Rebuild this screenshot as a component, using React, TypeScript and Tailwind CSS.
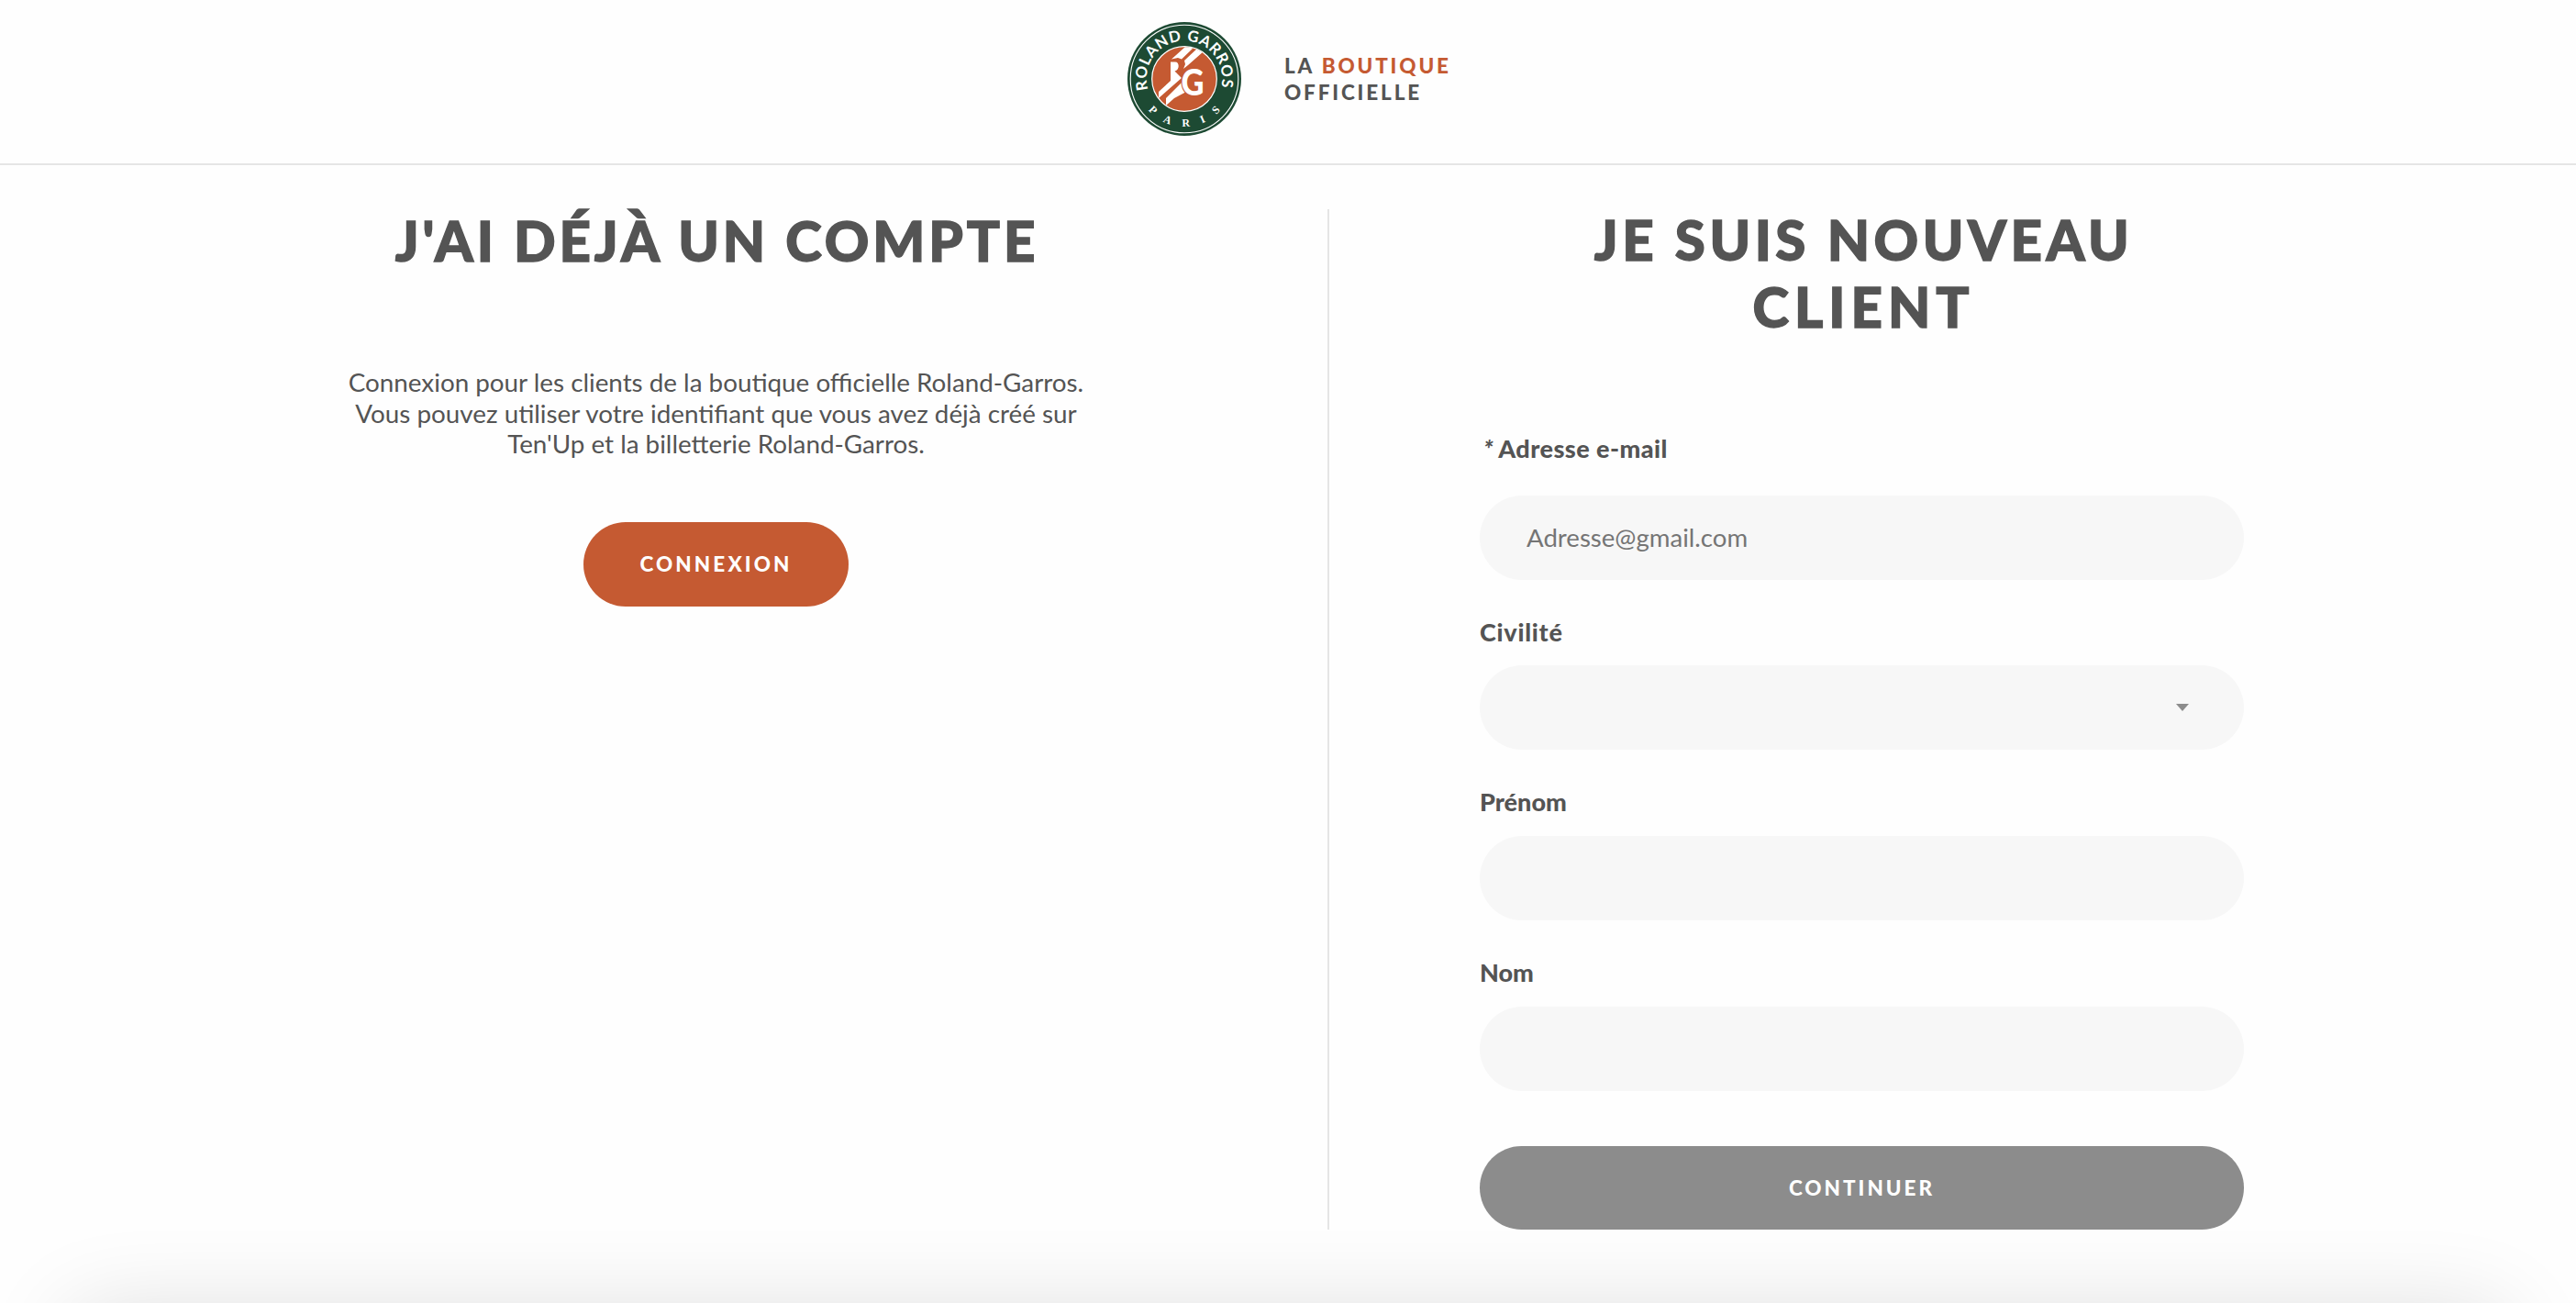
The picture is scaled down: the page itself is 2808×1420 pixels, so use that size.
const inputClass =
  'h-[92px] w-full rounded-full bg-[#f7f7f7] px-[51px] pb-[2px] text-[27.6px] text-[#545454] outline-none placeholder:text-[#757575] placeholder:opacity-100';

function Logo() {
  return (
    <svg width="124" height="124" viewBox="-62 -62 124 124" className="shrink-0">
      <defs>
        <path id="arc-top" d="M-39.5 11.5 A41.2 41.2 0 1 1 39.5 11.5" />
        <path id="arc-bottom" d="M-52 0 A52 52 0 0 0 52 0" />
        <clipPath id="disc">
          <circle r="34.8" />
        </clipPath>
      </defs>
      <circle r="62" fill="#1d4a33" />
      <circle r="58.8" fill="none" stroke="#fff" strokeWidth="1.1" />
      <circle r="35.3" fill="#c55a32" stroke="#fff" strokeWidth="1.2" />
      {/* Court lines, cut by the monogram */}
      <g clipPath="url(#disc)" fill="#fff">
        <path d="M-14 -21.5 L1 -35 H11 L-3 -21.5 L-7 -23 Z" />
        <path d="M0 -20 L16 -35 L21 -30 L4 -15 L-1 -11 L1 -16 Z" />
        <path d="M-15 -18.5 H-10 C-5 -18.5 -5 -9.5 -10.5 -8.5 L-9 -7 L-3 -1 L-28 21 V14 L-15 2 Z" />
        <path d="M-20 21 L-3 4 L4 13 L-11 21 L-20 29 Z" />
      </g>
      <g fill="#fff">
        <text
          x="-3.5"
          y="18"
          fontSize="39"
          fontWeight="900"
          fontFamily="Lato, sans-serif"
          textLength="25"
          lengthAdjust="spacingAndGlyphs"
          stroke="#c55a32"
          strokeWidth="2.4"
          paintOrder="stroke"
        >
          G
        </text>
        <text fontFamily="Lato, sans-serif" fontSize="16.8" fontWeight="700">
          <textPath href="#arc-top" textLength="150" lengthAdjust="spacing">ROLAND GARROS</textPath>
        </text>
        <text fontFamily="Liberation Serif, serif" fontSize="12" fontWeight="700">
          <textPath href="#arc-bottom" startOffset="37" textLength="89" lengthAdjust="spacing">PARIS</textPath>
        </text>
      </g>
    </svg>
  );
}

export default function App() {
  return (
    <div className="flex h-[1420px] w-[2808px] flex-col overflow-hidden bg-[#fefefe] font-['Lato',sans-serif] text-[#545454]">
      <header className="flex h-[180px] shrink-0 justify-center border-b-2 border-[#e5e5e5] pt-6">
        <div className="flex h-[124px] gap-[47px]">
          <Logo />
          <div className="mt-[33px] w-[179px] text-[22.5px] leading-[29px] font-black whitespace-nowrap">
            <p className="tracking-[2.85px]">
              LA <span className="text-[#c55a32]">BOUTIQUE</span>
            </p>
            <p className="tracking-[2.85px]">OFFICIELLE</p>
          </div>
        </div>
      </header>

      <main className="mt-12 flex h-[1112px] shrink-0">
        <section className="flex w-[1447px] shrink-0 flex-col items-center pl-[114px]">
          <h1 className="-mt-[2px] pl-[2px] text-[60px] leading-[72px] font-black tracking-[3.9px] whitespace-nowrap [-webkit-text-stroke:1.4px_#545454]">
            J'AI DÉJÀ UN COMPTE
          </h1>
          <div className="mt-[102px] text-center text-[27.8px] leading-[33.6px] whitespace-nowrap">
            <p>Connexion pour les clients de la boutique officielle Roland-Garros.</p>
            <p>Vous pouvez utiliser votre identifiant que vous avez déjà créé sur</p>
            <p>Ten'Up et la billetterie Roland-Garros.</p>
          </div>
          <button className="mt-[68px] h-[92px] w-[289px] rounded-full bg-[#c55a32] text-[22.5px] font-black tracking-[3.1px] text-white">
            CONNEXION
          </button>
        </section>

        <section className="flex flex-1 border-l-2 border-[#e5e5e5] pl-[164px]">
          <form className="flex w-[833px] flex-col">
            <h1 className="-mt-[3px] pl-1 text-center text-[60px] leading-[72.5px] font-black [-webkit-text-stroke:1.4px_#545454]">
              <span className="tracking-[4.5px]">JE SUIS NOUVEAU</span>
              <br />
              <span className="tracking-[6px]">CLIENT</span>
            </h1>
            <label className="mt-[102px] h-[68px] pl-1 text-[27px] leading-[34px] font-black tracking-[0.45px]">
              <i className="tracking-[-0.5px]">*</i> Adresse e-mail
            </label>
            <input type="text" placeholder="Adresse@gmail.com" className={inputClass} />
            <label className="mt-10 h-[53px] text-[27px] leading-[34px] font-black tracking-[0.75px]">Civilité</label>
            <div className="flex h-[92px] shrink-0 items-center justify-end rounded-full bg-[#f7f7f7] pr-[60px]">
              <svg width="14" height="8" viewBox="0 0 14 8" fill="#8c8c8c">
                <path d="M0 0H14L7 8Z" />
              </svg>
            </div>
            <label className="mt-10 h-[54px] text-[27px] leading-[34px] font-black">Prénom</label>
            <input type="text" className={inputClass} />
            <label className="mt-10 h-[54px] text-[27px] leading-[34px] font-black">Nom</label>
            <input type="text" className={inputClass} />
            <button className="mt-[60px] h-[91px] w-full shrink-0 rounded-full bg-[#8c8c8c] text-[22.5px] font-black tracking-[3px] text-white">
              CONTINUER
            </button>
          </form>
        </section>
      </main>

      <footer className="mx-20 mt-20 h-40 shrink-0 bg-white shadow-[0_12px_100px_0_rgba(0,0,0,0.14)]" />
    </div>
  );
}
